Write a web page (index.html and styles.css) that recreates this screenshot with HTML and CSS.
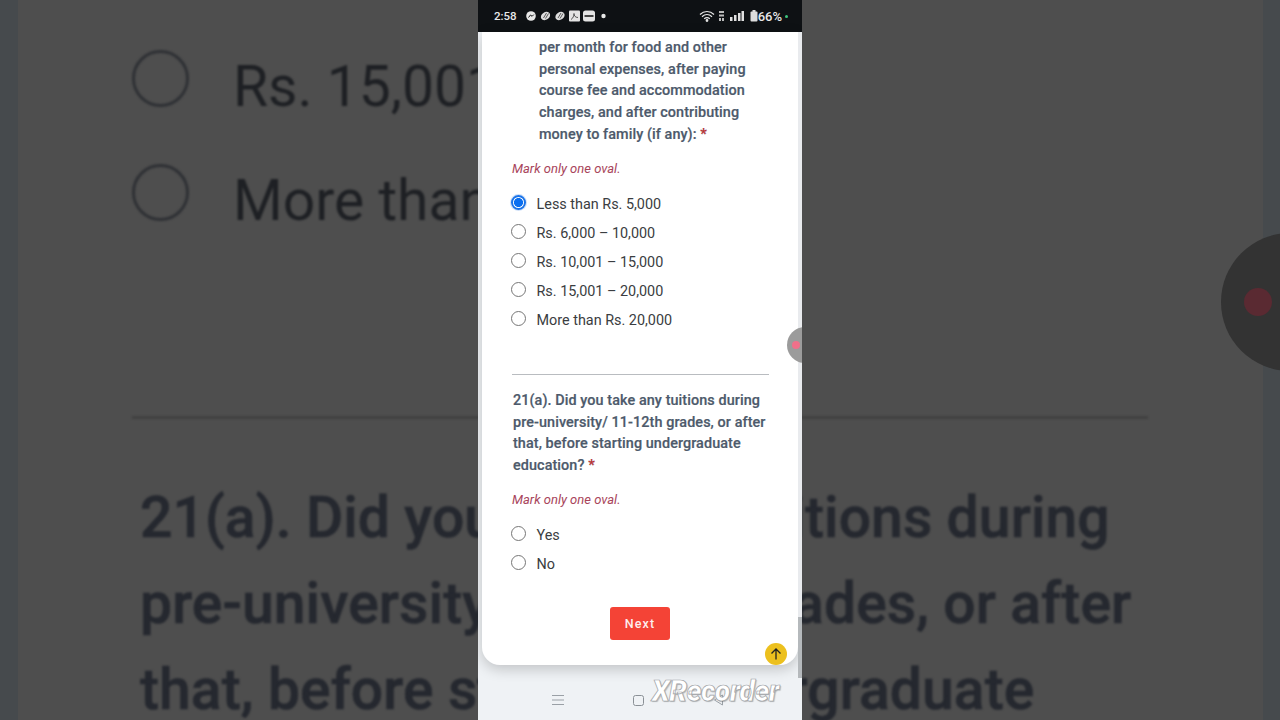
FILE: index.html
```html
<!DOCTYPE html>
<html lang="en">
<head>
<meta charset="utf-8">
<title>Form recording</title>
<link rel="stylesheet" href="styles.css">
</head>
<body>
<div class="stage">
  <div class="backdrop">
    <div class="bd-inner">
      <div class="bd-option"><span class="bd-radio"></span><span class="bd-label">Rs. 15,001 – 20,000</span></div>
      <div class="bd-option"><span class="bd-radio"></span><span class="bd-label">More than Rs. 20,000</span></div>
      <div class="bd-rule"></div>
      <div class="bd-question">21(a). Did you take any tuitions during<br>pre-university/ 11-12th grades, or after<br>that, before starting undergraduate</div>
    </div>
    <div class="bd-bubble"><span class="bd-dot"></span></div>
  </div>

  <div class="phone">
    <div class="status">
      <span class="time">2:58</span>
      <svg class="notif" width="84" height="12" viewBox="0 0 84 12">
        <circle cx="6" cy="6" r="4.800" fill="#e8e8e8"/><path d="M3.500 7.500 5.500 5l1.600 1.300L8.800 4.600" stroke="#111" fill="none"/>
        <g fill="#ddd"><ellipse cx="20.500" cy="6" rx="5" ry="3.800" transform="rotate(-35 20.500 6)"/><ellipse cx="35" cy="6" rx="5" ry="3.800" transform="rotate(-35 35 6)"/></g>
        <g stroke="#222" stroke-width=".7"><path d="M18.500 8l3-5M20.500 8.500l3-5M33 8l3-5M35 8.500l3-5"/></g>
        <rect x="44" y=".5" width="11" height="11" rx="1" fill="#e4e4e4"/><path d="M46 9.500c2-1 3-4 3-6 0 2 1 4 4 4" stroke="#555" fill="none"/>
        <rect x="58" y=".5" width="12" height="11" rx="2.500" fill="#e4e4e4"/><rect x="59.500" y="5" width="9" height="2" fill="#444"/>
        <circle cx="78.500" cy="6" r="2.200" fill="#e8e8e8"/>
      </svg>
      <span class="status-gap"></span>
      <svg class="wifi" width="16" height="12" viewBox="0 0 16 12" fill="none" stroke="#e8e8e8" stroke-width="1.200"><path d="M1 4.500c4-4 10-4 14 0M3 6.700c3-2.700 7-2.700 10 0M5.200 8.800c1.600-1.300 4-1.300 5.600 0"/><circle cx="8" cy="10.500" r=".8" fill="#e8e8e8"/></svg>
      <svg class="sim" width="7" height="12" viewBox="0 0 7 12" fill="#bbb"><rect x="1" y="1" width="5" height="2"/><rect x="1" y="4.500" width="5" height="2"/><rect x="1" y="8" width="2" height="3"/><rect x="4" y="8" width="2" height="3"/></svg>
      <svg class="signal" width="14" height="12" viewBox="0 0 14 12" fill="#e0e0e0"><rect x="0" y="7" width="2.500" height="4"/><rect x="4" y="5" width="2.500" height="6"/><rect x="8" y="3" width="2.500" height="8"/><rect x="11.500" y="1" width="2.500" height="10"/></svg>
      <svg class="batt" width="8" height="12" viewBox="0 0 8 12" fill="#ddd"><rect x="2.500" y="0" width="3" height="2"/><rect x="0.500" y="1.500" width="7" height="10" rx="1"/></svg>
      <span class="pct">66%</span>
      <span class="green"></span>
    </div>

    <div class="page">
      <main class="card">
        <div class="q q-indent">per month for food and other<br>personal expenses, after paying<br>course fee and accommodation<br>charges, and after contributing<br>money to family (if any): <b class="req">*</b></div>
        <p class="hint">Mark only one oval.</p>
        <ul class="opts">
          <li class="opt"><span class="radio on"></span>Less than Rs. 5,000</li>
          <li class="opt"><span class="radio"></span>Rs. 6,000 – 10,000</li>
          <li class="opt"><span class="radio"></span>Rs. 10,001 – 15,000</li>
          <li class="opt"><span class="radio"></span>Rs. 15,001 – 20,000</li>
          <li class="opt"><span class="radio"></span>More than Rs. 20,000</li>
        </ul>
        <div class="rule"></div>
        <div class="q q-second">21(a). Did you take any tuitions during<br>pre-university/ 11-12th grades, or after<br>that, before starting undergraduate<br>education? <b class="req">*</b></div>
        <p class="hint hint-second">Mark only one oval.</p>
        <ul class="opts">
          <li class="opt"><span class="radio"></span>Yes</li>
          <li class="opt"><span class="radio"></span>No</li>
        </ul>
        <div class="actions"><button class="next">Next</button></div>
        <span class="up">
          <svg width="14" height="14" viewBox="0 0 14 14" fill="none" stroke="#222" stroke-width="1.300"><path d="M7 12.500V2M2.500 6.500 7 2l4.500 4.500"/></svg>
        </span>
      </main>
      <div class="scroll"><span class="thumb"></span></div>
    </div>

    <nav class="navbar">
      <svg width="12" height="12" viewBox="0 0 12 12" stroke="#9aa0a6" stroke-width="1"><path d="M0 1.500h12M0 6h12M0 10.500h12"/></svg>
      <svg width="11" height="11" viewBox="0 0 11 11" fill="none" stroke="#8a9096" stroke-width="1"><rect x=".5" y=".5" width="10" height="10" rx="2"/></svg>
      <svg width="11" height="12" viewBox="0 0 11 12" fill="none" stroke="#9aa0a6" stroke-width="1"><path d="M9.500 1 1.500 6l8 5z"/></svg>
    </nav>
    <span class="wm">XRecorder</span>
    <div class="bubble"><span class="bubble-dot"></span></div>
  </div>
</div>
</body>
</html>
```
FILE: styles.css
```css
* { box-sizing: border-box; }
html, body { margin: 0; padding: 0; }
body { width: 1280px; height: 720px; overflow: hidden; font-family: Roboto, "Liberation Sans", sans-serif; }
.stage { position: relative; width: 1280px; height: 720px; display: flex; justify-content: center; background: #464a4d; overflow: hidden; }

.backdrop { position: absolute; inset: 0 17px 0 18px; background: #4e4e4e; }
.bd-inner { display: flex; flex-direction: column; padding: 21px 0 0 114px; color: #1e2024; filter: blur(.8px); }
.bd-option { display: flex; align-items: center; gap: 44px; height: 114px; font-size: 57px; line-height: 1; }
.bd-label { padding-top: 16px; white-space: nowrap; }
.bd-radio { width: 57px; height: 57px; flex: none; border: 3px solid #2f3135; border-radius: 50%; }
.bd-rule { height: 3px; width: 1016px; margin: 167px 0 0 0; background: #414141; }
.bd-question { margin: 56px 0 0 8px; font-size: 57px; line-height: 86px; font-weight: 500; color: #25282f; white-space: nowrap; letter-spacing: .1px; -webkit-text-stroke: .6px #25282f; }
.bd-bubble { position: absolute; left: 1203px; top: 233px; width: 138px; height: 138px; border-radius: 50%; background: #333; display: flex; align-items: center; padding-left: 23px; }
.bd-dot { width: 28px; height: 28px; border-radius: 50%; background: #5a2a32; }

.phone { position: relative; width: 324px; height: 720px; display: flex; flex-direction: column; overflow: hidden; background: #eff2f5; }

.status { height: 32px; flex: none; display: flex; align-items: center; padding: 0 14px 0 16px; background: #0e1114; color: #e8e8e8; font-size: 11px; font-weight: 500; }
.time { font-size: 11.500px; width: 31px; }
.status-gap { flex: 1; }
.wifi { margin-right: 3px; }
.sim { margin-right: 5px; }
.signal { margin-right: 6px; }
.pct { font-size: 13px; }
.green { width: 3px; height: 3px; margin-left: 3px; border-radius: 50%; background: #3fc47d; }

.page { position: relative; flex: none; height: 633px; display: flex; }
.card { position: relative; width: 316px; height: 633px; margin-left: 4px; padding: 5px 0 0 30px; background: #fff; border-radius: 0 0 18px 18px; box-shadow: 0 4px 14px rgba(0,0,0,.2); color: #3c4043; }
.scroll { position: absolute; right: 0; top: 0; width: 4px; height: 633px; background: #e9ebee; }
.thumb { position: absolute; left: 0; top: 585px; width: 4px; height: 61px; background: #b5b9bc; }

.q { font-size: 14.400px; letter-spacing: .08px; line-height: 21.700px; font-weight: 500; color: #4d5a6b; -webkit-text-stroke: .2px #4d5a6b; white-space: nowrap; }
.q-indent { margin-left: 27px; }
.q-second { margin-top: 15px; margin-left: 1px; }
.req { color: #d32f2f; font-weight: 700; }
.hint { margin: 14.500px 0 0; font-size: 13px; line-height: 18px; font-style: italic; color: #a8445a; }
.opts { list-style: none; margin: 12px 0 0; padding: 0; }
.opt { display: flex; align-items: center; height: 29px; font-size: 14.400px; color: #3a3d41; white-space: nowrap; }
.radio { width: 15px; height: 15px; flex: none; margin: -4px 10.500px 0 -1px; border: 1px solid #767676; border-radius: 50%; background: #fff; }
.radio.on { border: 2px solid #1a73e8; background: radial-gradient(circle, #0b6ff0 0 4.200px, #fff 4.800px); box-shadow: 0 0 0 1px #cfe0f7; }
.rule { width: 257px; height: 1px; margin-top: 39px; background: #b9bcc0; }

.actions { display: flex; justify-content: flex-start; margin: 27.500px 0 0 98px; }
.next { width: 60px; height: 33px; border: 0; border-radius: 3px; background: #f44336; color: #fdeeee; font: 500 12.500px Roboto, sans-serif; letter-spacing: 1.100px; }
.up { position: absolute; right: 11px; top: 611px; width: 22px; height: 22px; display: flex; align-items: center; justify-content: center; border-radius: 50%; background: #ecc01e; }

.navbar { flex: 1; display: flex; align-items: center; justify-content: center; gap: 69px; padding: 15px 4px 0 0; }
.wm { position: absolute; left: 174px; top: 678px; font-size: 28.500px; line-height: 28px; font-weight: 900; font-style: italic; color: #fff; -webkit-text-stroke: .7px #9da1a5; text-shadow: 1px 1px 1px rgba(0,0,0,.25); white-space: nowrap; letter-spacing: -.6px; }
.bubble { position: absolute; left: 309px; top: 327px; width: 36px; height: 36px; border-radius: 50%; background: #9b9b9b; display: flex; align-items: center; padding-left: 5px; }
.bubble-dot { width: 8px; height: 8px; border-radius: 50%; background: #f0708a; }
```
